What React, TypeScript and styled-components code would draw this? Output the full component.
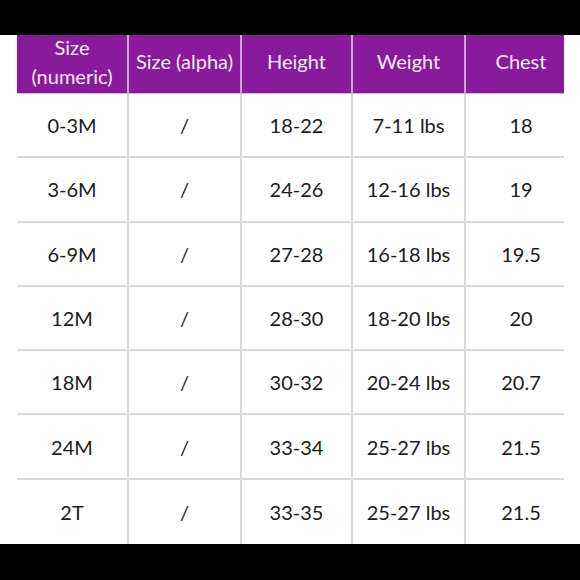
import React from "react";
import styled, { createGlobalStyle } from "styled-components";

const Global = createGlobalStyle`
  html, body { margin: 0; padding: 0; background: #000; }
  body { font-family: "Lato", "Noto Sans", sans-serif; }
`;

const Page = styled.div`
  width: 580px;
  height: 580px;
  display: flex;
  flex-direction: column;
  background: #000;
`;

const Bar = styled.div<{ $h: number }>`
  height: ${(p) => p.$h}px;
  flex: none;
  background: #000;
`;

const Sheet = styled.div`
  flex: 1;
  background: #fff;
  padding-left: 17px;
  overflow: hidden;
`;

const Grid = styled.div`
  display: grid;
  grid-template-columns: 112px 113px 111px 113px 98px;
  grid-template-rows: 59px repeat(7, 64.3px);
`;

const HeadCell = styled.div<{ $last?: boolean; $shift?: number }>`
  background: #8a1a9c;
  color: #f6ecf7;
  font-size: 20px;
  line-height: 29px;
  display: flex;
  align-items: center;
  justify-content: center;
  text-align: center;
  border-right: ${(p) => (p.$last ? "none" : "2px solid #c9a2d1")};
  border-bottom: 1px solid #d7b9dd;
  padding-left: ${(p) => p.$shift ?? 0}px;
  padding-bottom: 5px;
  white-space: nowrap;
`;

const Cell = styled.div<{ $last?: boolean; $bottom?: boolean; $shift?: number }>`
  color: #1b1b1b;
  font-size: 20px;
  display: flex;
  align-items: center;
  justify-content: center;
  border-right: ${(p) => (p.$last ? "none" : "2px solid #d9d9d9")};
  border-bottom: ${(p) => (p.$bottom ? "none" : "2px solid #d9d9d9")};
  padding-left: ${(p) => p.$shift ?? 0}px;
`;

const headers = ["Size\n(numeric)", "Size (alpha)", "Height", "Weight", "Chest"];
const rows = [
  ["0-3M", "/", "18-22", "7-11 lbs", "18"],
  ["3-6M", "/", "24-26", "12-16 lbs", "19"],
  ["6-9M", "/", "27-28", "16-18 lbs", "19.5"],
  ["12M", "/", "28-30", "18-20 lbs", "20"],
  ["18M", "/", "30-32", "20-24 lbs", "20.7"],
  ["24M", "/", "33-34", "25-27 lbs", "21.5"],
  ["2T", "/", "33-35", "25-27 lbs", "21.5"],
];

export default function App() {
  return (
    <>
      <Global />
      <Page>
        <Bar $h={35} />
        <Sheet>
          <Grid>
            {headers.map((h, i) => (
              <HeadCell key={h} $last={i === 4} $shift={i === 4 ? 12 : 0}>
                <span>
                  {h.split("\n").map((l, j) => (
                    <React.Fragment key={j}>
                      {j > 0 && <br />}
                      {l}
                    </React.Fragment>
                  ))}
                </span>
              </HeadCell>
            ))}
            {rows.map((r, ri) =>
              r.map((c, ci) => (
                <Cell
                  key={`${ri}-${ci}`}
                  $last={ci === 4}
                  $bottom={ri === rows.length - 1}
                  $shift={ci === 4 ? 12 : 0}
                >
                  {c}
                </Cell>
              ))
            )}
          </Grid>
        </Sheet>
        <Bar $h={36} />
      </Page>
    </>
  );
}
